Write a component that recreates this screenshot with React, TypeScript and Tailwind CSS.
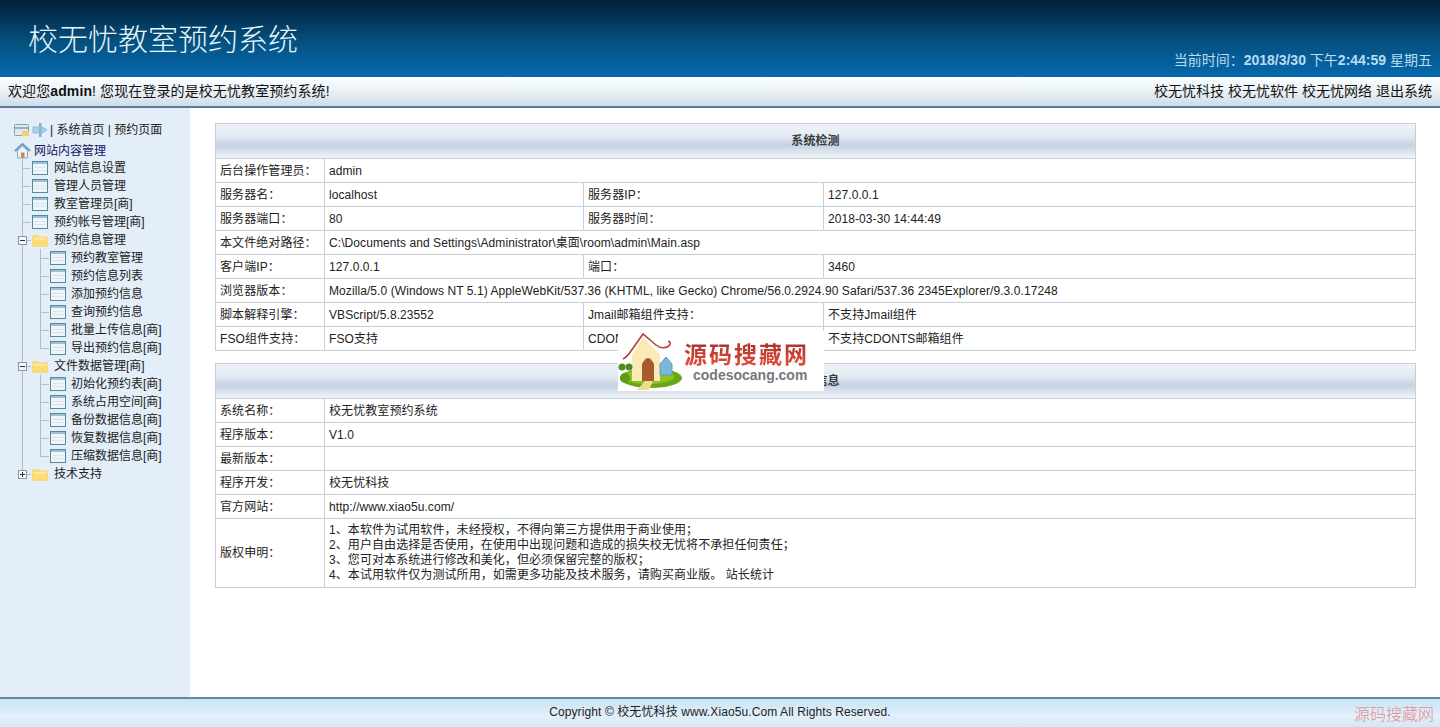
import React from "react";

const FONT = "font-['Liberation_Sans','Noto_Sans_CJK_SC',sans-serif]";

function Page() {
  return (
    <svg width="16" height="14" viewBox="0 0 16 14" className="shrink-0">
      <rect x="0.5" y="0.5" width="15" height="13" fill="#eef4f8" stroke="#55899e" />
      <rect x="1" y="1" width="14" height="2" fill="#9dc0d0" />
      <line x1="2" y1="6.5" x2="14" y2="6.5" stroke="#dbe6ec" />
      <line x1="2" y1="9.5" x2="14" y2="9.5" stroke="#dbe6ec" />
    </svg>
  );
}

function Folder() {
  return (
    <svg width="16" height="14" viewBox="0 0 16 14" className="shrink-0">
      <path d="M0.5 2.5 H6 L7.5 4 H15.5 V13.5 H0.5 Z" fill="#fbdc72" stroke="#f3d98e" />
      <rect x="1.5" y="5" width="13" height="2" fill="#fde99e" />
    </svg>
  );
}

function Home() {
  return (
    <svg width="17" height="16" viewBox="0 0 17 16" className="shrink-0">
      <path d="M1 8 L8.5 1 L16 8" fill="none" stroke="#6f9cba" strokeWidth="2" />
      <path d="M3.5 7.5 L8.5 3 L13.5 7.5 V15 H3.5 Z" fill="#eaf2f8" stroke="#86abc4" />
      <rect x="7" y="9.5" width="3.5" height="5.5" fill="#c98a4a" />
    </svg>
  );
}

function Line({ kind }: { kind: "pass" | "tee" | "corner" | "none" }) {
  return (
    <svg width="18" height="18" viewBox="0 0 18 18" className="shrink-0">
      {kind !== "none" && (
        <line x1="9.5" y1="0" x2="9.5" y2={kind === "corner" ? 9.5 : 18} stroke="#b0c0cb" />
      )}
      {(kind === "tee" || kind === "corner") && (
        <line x1="9" y1="9.5" x2="18" y2="9.5" stroke="#b0c0cb" />
      )}
    </svg>
  );
}

function Toggle({ open, last }: { open: boolean; last?: boolean }) {
  return (
    <svg width="18" height="18" viewBox="0 0 18 18" className="shrink-0">
      <line x1="9.5" y1="0" x2="9.5" y2={last ? 5 : 18} stroke="#b0c0cb" />
      <line x1="13" y1="9.5" x2="18" y2="9.5" stroke="#b0c0cb" />
      <rect x="5.5" y="5.5" width="8" height="8" fill="#f4f8fb" stroke="#8c979e" />
      <line x1="7" y1="9.5" x2="12" y2="9.5" stroke="#333" />
      {!open && <line x1="9.5" y1="7" x2="9.5" y2="12" stroke="#333" />}
    </svg>
  );
}

function Item({ text, last }: { text: string; last?: boolean }) {
  return (
    <div className="flex h-[18px] items-center pl-[13px]">
      <Line kind={last ? "corner" : "tee"} />
      <div className="ml-[1px] mr-[6px]">
        <Page />
      </div>
      <span>{text}</span>
    </div>
  );
}

function SubItem({ text, last }: { text: string; last?: boolean }) {
  return (
    <div className="flex h-[18px] items-center pl-[13px]">
      <Line kind="pass" />
      <Line kind={last ? "corner" : "tee"} />
      <div className="ml-[1px] mr-[5px]">
        <Page />
      </div>
      <span>{text}</span>
    </div>
  );
}

function FolderRow({ text, open, last }: { text: string; open: boolean; last?: boolean }) {
  return (
    <div className="flex h-[18px] items-center pl-[13px]">
      <Toggle open={open} last={last} />
      <div className="ml-[1px] mr-[6px]">
        <Folder />
      </div>
      <span>{text}</span>
    </div>
  );
}

function Sidebar() {
  return (
    <aside className="w-[190px] shrink-0 bg-[#e3eef8] pt-[14px] text-[12px] text-[#222]">
      <div className="flex h-[16px] items-center pl-[14px]">
        <svg width="16" height="14" viewBox="0 0 16 14" className="shrink-0">
          <rect x="0.5" y="1.5" width="14" height="11" rx="1" fill="#dfeaf2" stroke="#7fa89c" />
          <rect x="1" y="4" width="13" height="2" fill="#8fb2c6" />
          <path d="M8 8 H15 V13 H8 Z" fill="#f1d267" />
        </svg>
        <svg width="16" height="16" viewBox="0 0 16 16" className="ml-[2px] shrink-0">
          <path d="M1 5 H10 L15 8 L10 11 H1 Z" fill="#a6d2e6" stroke="#8fbdd6" />
          <rect x="7" y="1" width="2.5" height="14" fill="#85b4cf" />
        </svg>
        <span className="ml-[2px]">| 系统首页 | 预约页面</span>
      </div>
      <div className="mt-[4px] flex h-[17px] items-center pl-[14px] text-[#15155f]">
        <Home />
        <span className="ml-[3px]">网站内容管理</span>
      </div>
      <Item text="网站信息设置" />
      <Item text="管理人员管理" />
      <Item text="教室管理员[商]" />
      <Item text="预约帐号管理[商]" />
      <FolderRow text="预约信息管理" open />
      <SubItem text="预约教室管理" />
      <SubItem text="预约信息列表" />
      <SubItem text="添加预约信息" />
      <SubItem text="查询预约信息" />
      <SubItem text="批量上传信息[商]" />
      <SubItem text="导出预约信息[商]" last />
      <FolderRow text="文件数据管理[商]" open />
      <SubItem text="初始化预约表[商]" />
      <SubItem text="系统占用空间[商]" />
      <SubItem text="备份数据信息[商]" />
      <SubItem text="恢复数据信息[商]" />
      <SubItem text="压缩数据信息[商]" last />
      <FolderRow text="技术支持" open={false} last />
    </aside>
  );
}

function Cols() {
  return (
    <colgroup>
      <col className="w-[109px]" />
      <col className="w-[259px]" />
      <col className="w-[240px]" />
      <col className="w-[592px]" />
    </colgroup>
  );
}

const cell = "h-[24px] border border-[#c3d0d9] pl-[4px] align-middle";

function HeadRow({ title }: { title: string }) {
  return (
    <tr>
      <th
        colSpan={4}
        className="h-[35px] border border-[#c3d0d9] bg-[linear-gradient(to_bottom,#edf2f7_0%,#e3eaf2_35%,#c4d2e3_62%,#e2e9f1_85%,#f2f5f8_100%)] text-center text-[12px] font-bold text-[#3a3a3a]"
      >
        {title}
      </th>
    </tr>
  );
}

function Row2({ a, b }: { a: string; b: string }) {
  return (
    <tr>
      <td className={cell}>{a}</td>
      <td className={cell} colSpan={3}>{b}</td>
    </tr>
  );
}

function Row4({ a, b, c, d }: { a: string; b: string; c: string; d: string }) {
  return (
    <tr>
      <td className={cell}>{a}</td>
      <td className={cell}>{b}</td>
      <td className={cell}>{c}</td>
      <td className={cell}>{d}</td>
    </tr>
  );
}

function Logo() {
  return (
    <div className="absolute left-[618px] top-[331px] z-10 flex h-[60px] w-[206px] items-center bg-white">
      <svg width="66" height="60" viewBox="0 0 66 60" className="shrink-0">
        <ellipse cx="33" cy="47" rx="31" ry="10" fill="#6aa516" />
        <ellipse cx="30" cy="46" rx="26" ry="7" fill="#8cc31e" />
        <path d="M14 24 L25 6 L42 24 V50 H14 Z" fill="#fbe9b8" />
        <path d="M5 28 Q9 26 13 20 L25 3 L38 14 Q44 19 51 15 Q54 11 50 10" fill="none" stroke="#b5403a" strokeWidth="1.6" />
        <path d="M24 50 V33 Q30 21 36 33 V50 Z" fill="#a8592f" />
        <path d="M27 50 L35 50 L31 59 L19 59 Z" fill="#f0dc8a" />
        <path d="M42 33 L48 26 L54 33 V44 H42 Z" fill="#7ab8d6" stroke="#5d9cc0" />
        <circle cx="4" cy="36" r="3.5" fill="#4f8a1a" />
        <circle cx="11" cy="36" r="3.5" fill="#4f8a1a" />
        <circle cx="7" cy="47" r="5" fill="#5d9a1c" />
      </svg>
      <div className="flex flex-col items-start pt-[2px]">
        <div className="bg-[linear-gradient(to_bottom,#a8322b,#e8503a)] bg-clip-text text-[23px] leading-[26px] font-bold tracking-[2px] text-transparent">源码搜藏网</div>
        <div className="ml-[9px] text-[14px] leading-[15px] font-bold tracking-[0px] text-[#77777d]">codesocang.com</div>
      </div>
    </div>
  );
}

export default function App() {
  return (
    <div className={`relative flex h-[727px] flex-col overflow-hidden bg-white ${FONT}`}>
      <header className="flex h-[77px] shrink-0 items-start justify-between bg-[linear-gradient(to_bottom,#03213a_0%,#043a60_30%,#05517f_55%,#065f9c_80%,#0668ad_100%)] pl-[28px] pr-[8px]">
        <h1 className="mt-[20px] text-[30px] leading-[40px] font-light text-[#e6f7fb]">校无忧教室预约系统</h1>
        <div className="mt-[52px] text-[14px] leading-[16px] text-[#b9dcee]">
          当前时间：<span className="font-bold">2018/3/30</span> 下午<span className="font-bold">2:44:59</span> 星期五
        </div>
      </header>

      <div className="flex h-[31px] shrink-0 items-center justify-between border-b-2 border-[#5c7d96] bg-[linear-gradient(to_bottom,#fafdff_0%,#eef4f8_40%,#cddde9_100%)] px-[8px] text-[14px] tracking-[0.1px] text-[#111]">
        <div>
          欢迎您<b>admin</b>! 您现在登录的是校无忧教室预约系统!
        </div>
        <div className="flex gap-[4px] tracking-[0px]">
          <span>校无忧科技</span>
          <span>校无忧软件</span>
          <span>校无忧网络</span>
          <span>退出系统</span>
        </div>
      </div>

      <div className="flex min-h-0 flex-1">
        <Sidebar />
        <main className="flex-1 pl-[25px] pr-[25px] pt-[15px] text-[12px] tracking-[0.08px] text-[#222]">
          <table className="w-[1200px] table-fixed border-collapse">
            <Cols />
            <tbody>
              <HeadRow title="系统检测" />
              <Row2 a="后台操作管理员：" b="admin" />
              <Row4 a="服务器名：" b="localhost" c="服务器IP：" d="127.0.0.1" />
              <Row4 a="服务器端口：" b="80" c="服务器时间：" d="2018-03-30 14:44:49" />
              <Row2 a="本文件绝对路径：" b="C:\Documents and Settings\Administrator\桌面\room\admin\Main.asp" />
              <Row4 a="客户端IP：" b="127.0.0.1" c="端口：" d="3460" />
              <Row2 a="浏览器版本：" b="Mozilla/5.0 (Windows NT 5.1) AppleWebKit/537.36 (KHTML, like Gecko) Chrome/56.0.2924.90 Safari/537.36 2345Explorer/9.3.0.17248" />
              <Row4 a="脚本解释引擎：" b="VBScript/5.8.23552" c="Jmail邮箱组件支持：" d="不支持Jmail组件" />
              <Row4 a="FSO组件支持：" b="FSO支持" c="CDONTS邮箱组件支持：" d="不支持CDONTS邮箱组件" />
            </tbody>
          </table>

          <table className="mt-[12px] w-[1200px] table-fixed border-collapse">
            <Cols />
            <tbody>
              <HeadRow title="系统信息" />
              <Row2 a="系统名称：" b="校无忧教室预约系统" />
              <Row2 a="程序版本：" b="V1.0" />
              <Row2 a="最新版本：" b="" />
              <Row2 a="程序开发：" b="校无忧科技" />
              <Row2 a="官方网站：" b="http://www.xiao5u.com/" />
              <tr>
                <td className="h-[69px] border border-[#c3d0d9] pl-[4px] align-middle">版权申明：</td>
                <td colSpan={3} className="h-[69px] border border-[#c3d0d9] pl-[4px] align-middle leading-[15px]">
                  <div>1、本软件为试用软件，未经授权，不得向第三方提供用于商业使用；</div>
                  <div>2、用户自由选择是否使用，在使用中出现问题和造成的损失校无忧将不承担任何责任；</div>
                  <div>3、您可对本系统进行修改和美化，但必须保留完整的版权；</div>
                  <div>4、本试用软件仅为测试所用，如需更多功能及技术服务，请购买商业版。 站长统计</div>
                </td>
              </tr>
            </tbody>
          </table>
        </main>
      </div>

      <footer className="flex h-[30px] shrink-0 items-center justify-center border-t-2 border-[#5f8a9c] bg-[linear-gradient(to_bottom,#c9e3f5_0%,#e2f0fa_60%,#d4e8f6_100%)] pb-[2px] text-[12px] tracking-[0.1px] text-[#222]">
        Copyright © 校无忧科技 www.Xiao5u.Com All Rights Reserved.
      </footer>

      <Logo />
      <div className="absolute bottom-[3px] right-[6px] text-[16px] leading-[18px] font-light text-[#e88a8f]">源码搜藏网</div>
    </div>
  );
}
